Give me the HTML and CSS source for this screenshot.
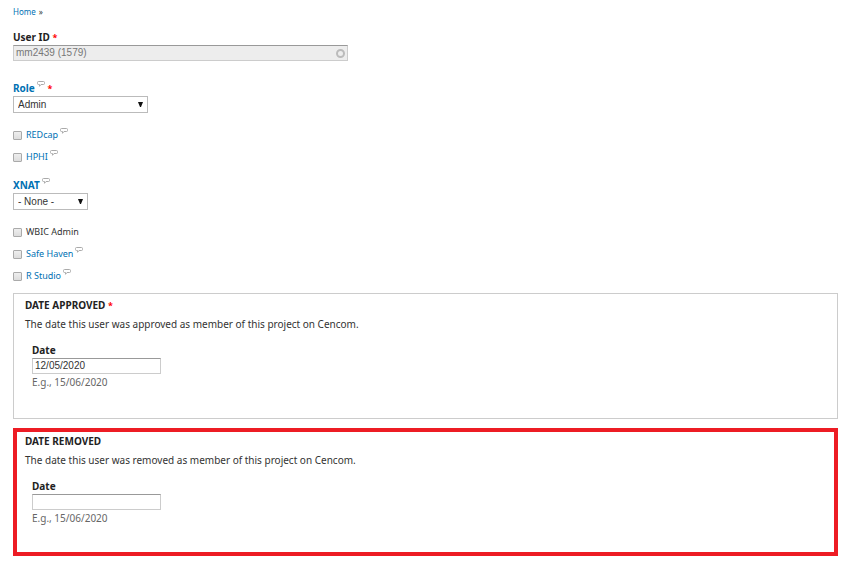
FILE: index.html
```html
<!DOCTYPE html>
<html lang="en">
<head>
  <meta charset="utf-8">
  <title>Project member</title>
  <meta name="viewport" content="width=device-width,initial-scale=1">
  <link rel="stylesheet" href="styles.css">
</head>
<body>

  <svg class="sprite" aria-hidden="true">
    <symbol id="bubble" viewBox="0 0 8 6">
      <path d="M1.5 .5h5q1 0 1 1v1q0 1-1 1H4L2.5 5.3V3.5h-1q-1 0-1-1v-1q0-1 1-1z" fill="#fff" stroke="#aaa"/>
    </symbol>
  </svg>

  <nav class="breadcrumb"><a href="#">Home</a> »</nav>

  <form class="member-form">
    <div class="form-item">
      <label class="label" for="user">User ID <span class="required">*</span></label>
      <div class="autocomplete">
        <input class="text user" id="user" type="text" value="mm2439 (1579)" disabled>
        <span class="throbber"></span>
      </div>
    </div>

    <div class="form-item">
      <label class="label help" for="role">Role<svg class="bubble"><use href="#bubble"/></svg> <span class="required">*</span></label>
      <div class="select-wrap">
        <select class="select role" id="role"><option>Admin</option></select>
      </div>
    </div>

    <div class="checks">
      <div class="check">
        <input class="box" type="checkbox" id="redcap">
        <label class="help" for="redcap">REDcap<svg class="bubble"><use href="#bubble"/></svg></label>
      </div>
      <div class="check">
        <input class="box" type="checkbox" id="hphi">
        <label class="help" for="hphi">HPHI<svg class="bubble"><use href="#bubble"/></svg></label>
      </div>
    </div>

    <div class="form-item">
      <label class="label help" for="xnat">XNAT<svg class="bubble"><use href="#bubble"/></svg></label>
      <div class="select-wrap">
        <select class="select xnat" id="xnat"><option>- None -</option></select>
      </div>
    </div>

    <div class="checks">
      <div class="check">
        <input class="box" type="checkbox" id="wbic">
        <label for="wbic">WBIC Admin</label>
      </div>
      <div class="check">
        <input class="box" type="checkbox" id="haven">
        <label class="help" for="haven">Safe Haven<svg class="bubble"><use href="#bubble"/></svg></label>
      </div>
      <div class="check">
        <input class="box" type="checkbox" id="rstudio">
        <label class="help" for="rstudio">R Studio<svg class="bubble"><use href="#bubble"/></svg></label>
      </div>
    </div>

    <section class="panel">
      <h2 class="title">Date approved <span class="required">*</span></h2>
      <p class="description">The date this user was approved as member of this project on Cencom.</p>
      <div class="date">
        <label class="label" for="approved">Date</label>
        <input class="text" id="approved" type="text" value="12/05/2020">
        <p class="hint">E.g., 15/06/2020</p>
      </div>
    </section>

    <section class="panel highlight">
      <h2 class="title">Date removed</h2>
      <p class="description">The date this user was removed as member of this project on Cencom.</p>
      <div class="date">
        <label class="label" for="removed">Date</label>
        <input class="text" id="removed" type="text">
        <p class="hint">E.g., 15/06/2020</p>
      </div>
    </section>
  </form>

</body>
</html>
```

FILE: styles.css
```css
* {
  box-sizing: border-box;
  margin: 0;
  padding: 0;
}

body {
  padding: 4px 12px 8px 13px;
  font-family: "Lucida Grande", "Noto Sans", "DejaVu Sans", sans-serif;
  font-size: 9px;
  line-height: 16px;
  color: #333;
  background: #fff;
}

a,
.help {
  color: #0071b3;
  text-decoration: none;
}

.sprite {
  display: none;
}

.breadcrumb {
  font-size: 8px;
  margin-bottom: 9px;
}
.breadcrumb a {
  margin-right: 1px;
}

.member-form {
  display: flex;
  flex-direction: column;
}

.label {
  display: block;
  font-size: 10px;
  font-weight: bold;
}
.label:not(.help) {
  color: #222;
}

.label .required,
.title .required {
  font-size: 9px;
  line-height: 1;
  color: #f00;
}

.bubble {
  width: 8px;
  height: 6px;
  margin-left: 2px;
  vertical-align: 5px;
}

/* text fields */
.text {
  display: block;
  width: 129px;
  height: 16px;
  padding: 0 2px 1px;
  border: 1px solid #ccc;
  border-top-color: #999;
  font-family: "Liberation Sans", Arial, sans-serif;
  font-size: 10px;
  color: #333;
  background: #fff;
}

.autocomplete {
  display: grid;
  width: 335px;
  align-items: center;
  margin-bottom: 19px;
}
.autocomplete > * {
  grid-area: 1 / 1;
}
.user {
  width: 100%;
  color: #777;
  background: #ededed;
}
.throbber {
  justify-self: end;
  width: 9px;
  height: 9px;
  margin-right: 3px;
  border: 2px solid #bbb;
  border-radius: 50%;
}

/* drop-downs */
.select-wrap {
  display: grid;
  width: fit-content;
  align-items: center;
  margin-bottom: 14px;
}
.select-wrap::after {
  content: "";
  grid-area: 1 / 1;
  justify-self: end;
  width: 5px;
  height: 5px;
  margin-right: 5px;
  background: #111;
  clip-path: polygon(0 0, 100% 0, 60% 100%, 40% 100%);
  pointer-events: none;
}
.select {
  grid-area: 1 / 1;
  height: 17px;
  padding: 0 4px;
  appearance: none;
  border: 1px solid #bbb;
  border-radius: 0;
  font-family: "Liberation Sans", Arial, sans-serif;
  font-size: 10px;
  color: #333;
  background: #fff;
}
.role {
  width: 135px;
}
.xnat {
  width: 75px;
}

/* tick boxes */
.checks {
  display: flex;
  flex-direction: column;
  gap: 6px;
  margin-bottom: 9px;
}
.checks + .form-item {
  margin-top: 3px;
}
.check {
  display: flex;
  align-items: center;
  height: 16px;
  gap: 4px;
}
.box {
  appearance: none;
  width: 9px;
  height: 9px;
  border: 1px solid #aaa;
  border-radius: 1px;
  background: linear-gradient(#eee, #ddd);
}
.check .bubble {
  vertical-align: 4px;
}

/* date panels */
.panel {
  min-height: 126px;
  padding: 3px 11px;
  border: 1px solid #ccc;
}
.panel + .panel {
  margin-top: 9px;
}
.highlight {
  min-height: 128px;
  padding: 1px 8px;
  border: 4px solid #ed1c24;
}
.title {
  font-size: 10px;
  line-height: 16px;
  color: #222;
  text-transform: uppercase;
}
.description {
  margin: 3px 0 10px;
  font-size: 10px;
}
.date {
  padding-left: 7px;
}
.hint {
  font-size: 10px;
  color: #666;
}
```
